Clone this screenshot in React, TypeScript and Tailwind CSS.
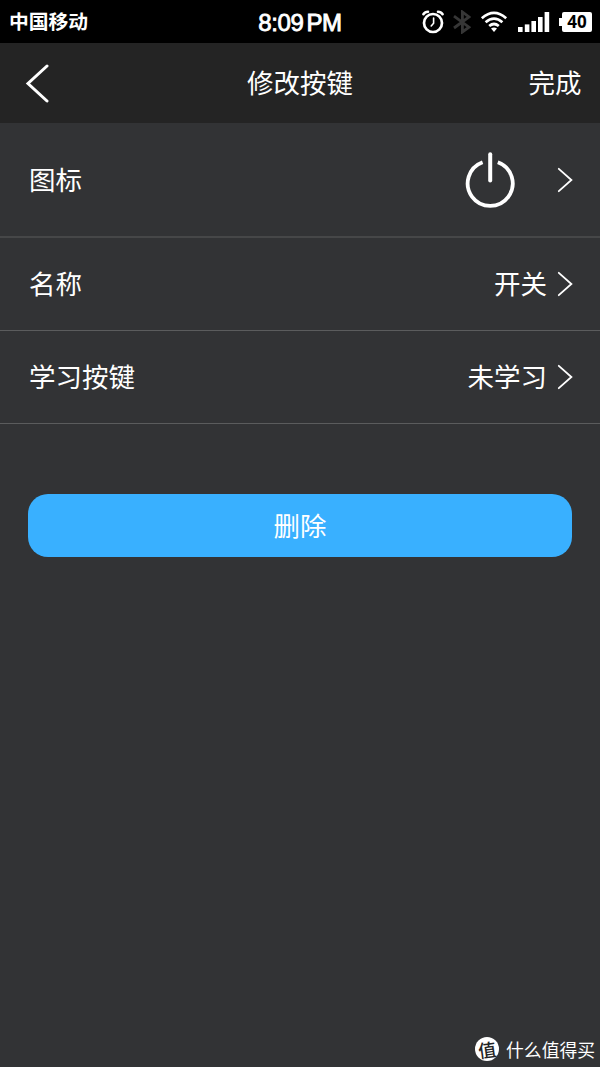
import React from 'react';

const rows = [
  { id: 'icon', label: '图标', value: '', height: 'h-[115px] border-b-2 border-[#464748]' },
  { id: 'name', label: '名称', value: '开关', height: 'h-[93px] border-b border-[#5b5c5d]' },
  { id: 'learn', label: '学习按键', value: '未学习', height: 'h-[93px] border-b border-[#5b5c5d]' },
];

function AlarmIcon() {
  return (
    <svg width="24" height="24" viewBox="0 0 24 24" fill="none" stroke="#fff" strokeLinecap="round">
      <circle cx="12" cy="13" r="9" strokeWidth="2.7" />
      <path d="M12.6 8v5.2l-2.4 2.8" strokeWidth="1.6" />
      <path d="M2.4 4.2Q4 1.8 7 1.8M21.6 4.2Q20 1.8 17 1.8" strokeWidth="2.6" />
    </svg>
  );
}

function BluetoothIcon() {
  return (
    <svg width="18" height="24" viewBox="0 0 18 24" fill="none" stroke="#363636" strokeWidth="2.8">
      <path d="M1 6.2l15 11-6.6 4.8V2l6.6 5L1 18" />
    </svg>
  );
}

function WifiIcon() {
  return (
    <svg width="28" height="22" viewBox="0 0 28 22" fill="none" stroke="#fff" strokeWidth="2.7">
      <path d="M1.8 7.2Q14-3.4 26.2 7.2" />
      <path d="M5.6 11.2Q14 4 22.4 11.2" />
      <path d="M9.2 15Q14 11 18.8 15" />
      <path d="M11 17.6Q14 15.6 17 17.6L14 21z" fill="#fff" stroke="none" />
    </svg>
  );
}

function SignalIcon() {
  return (
    <svg width="32" height="20" viewBox="0 0 32 20" fill="#fff">
      <rect x="0" y="15" width="4.6" height="5" />
      <rect x="6.8" y="12.4" width="4.6" height="7.6" />
      <rect x="13.4" y="9" width="4.6" height="11" />
      <rect x="20" y="5" width="4.6" height="15" />
      <rect x="26.6" y="0" width="4.6" height="20" />
    </svg>
  );
}

function PowerIcon() {
  return (
    <svg width="50" height="58" viewBox="0 0 50 58" fill="none" stroke="#fff">
      <path d="M17.6 11.2A22.5 22.5 0 1 0 32.8 11.2" strokeWidth="3.8" />
      <path d="M25.2 3.2v26.2" strokeWidth="4" strokeLinecap="round" />
    </svg>
  );
}

function ChevronRight() {
  return (
    <svg width="16" height="26" viewBox="0 0 16 26" fill="none" stroke="#fff" strokeWidth="1.8" strokeLinecap="round">
      <path d="M1.8 1.8L14.4 13 1.8 24.2" />
    </svg>
  );
}

function StatusBar() {
  return (
    <div className="grid h-[43px] grid-cols-[1fr_auto_1fr] items-center bg-black">
      <span className="pb-[3px] pl-[9px] text-[19.8px] leading-10 font-bold">中国移动</span>
      <div className="flex items-center gap-[3px] font-['Liberation_Sans',sans-serif] text-[24px] leading-[45px]">
        <span className="tracking-[-0.4px] [-webkit-text-stroke:0.8px_white]">8:09</span>
        <span className="tracking-[-0.4px] [-webkit-text-stroke:0.9px_white]">PM</span>
      </div>
      <div className="flex items-center justify-end pr-2 pb-px">
        <AlarmIcon />
        <div className="ml-[8px]"><BluetoothIcon /></div>
        <div className="ml-[9px]"><WifiIcon /></div>
        <div className="ml-[10px] pb-px"><SignalIcon /></div>
        <div className="ml-[9px] flex items-center">
          <div className="h-2 w-[3px] bg-white" />
          <div className="h-5 w-[30px] rounded-[2px] bg-white text-center font-['Noto_Sans',sans-serif] text-[17px] leading-5 font-bold text-black">40</div>
        </div>
      </div>
    </div>
  );
}

function Header() {
  return (
    <div className="grid h-20 grid-cols-[1fr_auto_1fr] items-center bg-[#242424]">
      <svg className="ml-[25px]" width="26" height="40" viewBox="0 0 26 40" fill="none" stroke="#fff" strokeWidth="3" strokeLinecap="round">
        <path d="M22 3L3 20.5 22 38" />
      </svg>
      <span className="pb-0.5">修改按键</span>
      <span className="pr-[18.5px] pb-0.5 text-right">完成</span>
    </div>
  );
}

export default function App() {
  return (
    <div className="flex h-[1067px] w-[600px] flex-col bg-[#323335] font-['Noto_Sans_CJK_SC',sans-serif] text-[26.5px] leading-10 text-white">
      <StatusBar />
      <Header />

      {rows.map((row) => (
        <div key={row.id} className={`flex shrink-0 items-center justify-between pr-[27px] pl-[29px] ${row.height}`}>
          <span className="pb-0.5">{row.label}</span>
          <div className="flex items-center">
            {row.id === 'icon' ? (
              <div className="mr-[42px]"><PowerIcon /></div>
            ) : (
              <span className="mr-[10px] pb-0.5">{row.value}</span>
            )}
            <ChevronRight />
          </div>
        </div>
      ))}

      <button className="mx-7 mt-[70px] h-[63px] rounded-[20px] bg-[#39b0ff] pb-px">删除</button>

      <div className="mt-auto flex items-center justify-end gap-[7px] pr-[5px] pb-[6px] text-[17.8px] leading-6">
        <span className="flex h-6 w-6 items-center justify-center rounded-full bg-white text-[18px] font-medium text-[#222324]">
          <span className="-rotate-8 pb-px">值</span>
        </span>
        <span>什么值得买</span>
      </div>
    </div>
  );
}
